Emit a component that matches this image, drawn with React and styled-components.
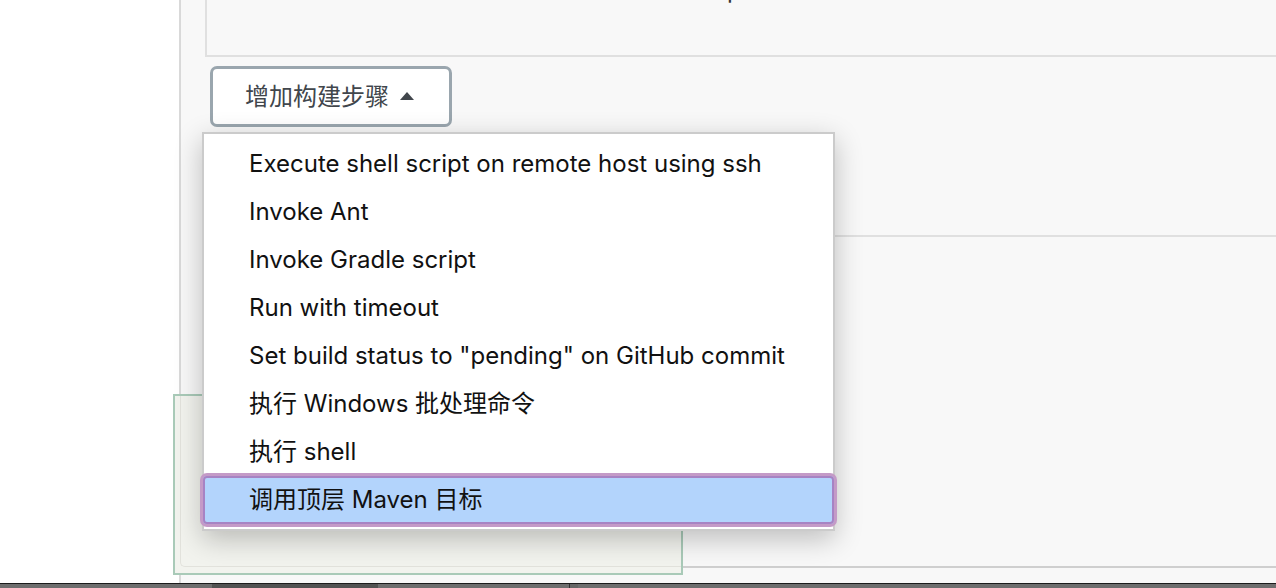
import React from 'react';
import styled, { createGlobalStyle } from 'styled-components';

const GlobalStyle = createGlobalStyle`
  html, body {
    margin: 0;
    padding: 0;
    background: #fff;
  }
  body {
    font-family: Inter, "Noto Sans CJK SC", sans-serif;
    color: #111;
  }
  * {
    box-sizing: border-box;
  }
`;

const Page = styled.div`
  position: relative;
  width: 1276px;
  height: 588px;
  overflow: hidden;
  display: flex;
  flex-direction: column;
`;

const Main = styled.div`
  flex: 1;
  display: flex;
`;

const Gutter = styled.div`
  width: 179px;
  background: #fff;
`;

const Panel = styled.div`
  flex: 1;
  background: #f8f8f8;
  border-left: 2px solid #d9d9d9;
  padding-left: 24px;
  display: flex;
  flex-direction: column;
`;

const TopSection = styled.div`
  height: 57px;
  border-left: 2px solid #e0e0e0;
  border-bottom: 2px solid #e0e0e0;
  padding-left: 520px;
  overflow: hidden;
`;

const CutText = styled.div`
  margin-top: -22px;
  font-size: 24px;
  line-height: 24px;
  color: #333;
`;

const StepSection = styled.div`
  height: 180px;
  border-bottom: 2px solid #e0e0e0;
  padding: 9px 0 0 5px;
`;

const NextSection = styled.div`
  height: 331px;
  border-bottom: 2px solid #cfcfcf;
`;

const ButtonWrap = styled.div`
  position: relative;
  display: inline-block;
`;

const AddButton = styled.button`
  display: flex;
  align-items: center;
  gap: 11px;
  width: 242px;
  height: 61px;
  padding: 0 0 0 32px;
  background: #fff;
  border: 3px solid #9aa6ae;
  border-radius: 7px;
  font-family: Inter, "Noto Sans CJK SC", sans-serif;
  font-size: 24px;
  line-height: 28px;
  color: #41464c;
  cursor: pointer;
`;

const Caret = styled.span`
  width: 0;
  height: 0;
  border-left: 7px solid transparent;
  border-right: 7px solid transparent;
  border-bottom: 8px solid #41464c;
  margin-top: -2px;
`;

const Menu = styled.ul`
  position: absolute;
  z-index: 5;
  left: -8px;
  top: calc(100% + 5px);
  width: 633px;
  margin: 0;
  padding: 6px 0 5px;
  list-style: none;
  background: #fff;
  border: 2px solid #cbcbcb;
  box-shadow: 0 8px 26px rgba(0, 0, 0, 0.24);
`;

const MenuItem = styled.li`
  height: 48px;
  display: flex;
  align-items: center;
  padding-left: 45px;
  font-size: 24px;
  line-height: 28px;
  color: #111;
  white-space: nowrap;
  border-radius: 4px;
  ${(p) =>
    p.$active &&
    `
    background: #b3d4fc;
    margin: 0 -1px;
    padding-left: 46px;
    box-shadow: inset 0 0 0 2px #a783c3, 0 0 0 3px #c49ac7;
  `}
`;

const Ghost = styled.div`
  position: absolute;
  z-index: 1;
  left: 173px;
  top: 394px;
  width: 510px;
  height: 181px;
  border: 2px solid #a9cab8;
  background: #f2f3ee;
  padding: 0 0 6px 5px;
  display: flex;
`;

const GhostInner = styled.div`
  flex: 1;
  border-left: 1px solid #e2e2dc;
  border-bottom: 1px solid #e2e2dc;
  border-bottom-left-radius: 5px;
`;

const BottomBar = styled.div`
  height: 5px;
  border-top: 1px solid #1c1c1c;
  background: #6e6e6e;
  display: flex;
`;

const BarSegment = styled.div`
  width: ${(p) => p.$w}px;
  background: ${(p) => p.$bg || 'transparent'};
  border-right: ${(p) => (p.$sep ? '1px solid #333' : 'none')};
`;

const items = [
  'Execute shell script on remote host using ssh',
  'Invoke Ant',
  'Invoke Gradle script',
  'Run with timeout',
  'Set build status to "pending" on GitHub commit',
  '执行 Windows 批处理命令',
  '执行 shell',
  '调用顶层 Maven 目标',
];

export default function App() {
  return (
    <>
      <GlobalStyle />
      <Page>
        <Main>
          <Gutter />
          <Panel>
            <TopSection>
              <CutText>p</CutText>
            </TopSection>
            <StepSection>
              <ButtonWrap>
                <AddButton>
                  增加构建步骤
                  <Caret />
                </AddButton>
                <Menu>
                  {items.map((t, i) => (
                    <MenuItem key={t} $active={i === items.length - 1}>
                      {t}
                    </MenuItem>
                  ))}
                </Menu>
              </ButtonWrap>
            </StepSection>
            <NextSection />
          </Panel>
        </Main>
        <BottomBar>
          <BarSegment $w={212} />
          <BarSegment $w={166} $bg="#525252" />
          <BarSegment $w={192} $sep />
          <BarSegment $w={8} $bg="#666" />
        </BottomBar>
        <Ghost>
          <GhostInner />
        </Ghost>
      </Page>
    </>
  );
}
